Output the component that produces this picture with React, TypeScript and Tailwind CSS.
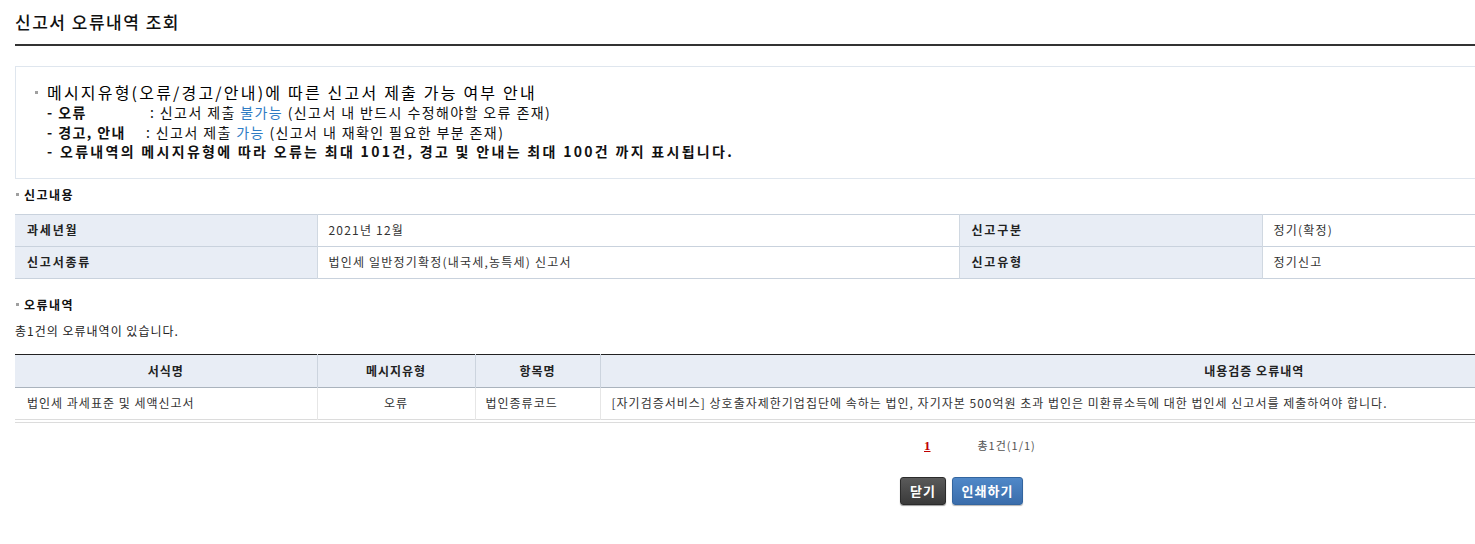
const font = "font-['Noto_Sans_CJK_KR',sans-serif]";

function SectionTitle({ title }: { title: string }) {
  return (
    <div className="flex items-center h-[16px]">
      <span className="ml-[1px] w-[3px] h-[3px] bg-[#a0a0a0]" />
      <span className="ml-[5px] text-[12px] font-bold text-[#111] leading-[16px] tracking-[1.5px]">{title}</span>
    </div>
  );
}

const summary = [
  ["과세년월", "2021년 12월", "신고구분", "정기(확정)"],
  ["신고서종류", "법인세 일반정기확정(내국세,농특세) 신고서", "신고유형", "정기신고"],
];

export default function App() {
  return (
    <div className={`${font} w-[1475px] h-[544px] overflow-hidden bg-white text-[#333]`}>
      <div className="w-[1893px] ml-[15px]">
        {/* Title */}
        <div className="pt-[10px] pb-[10px] border-b-2 border-[#333]">
          <h1 className="text-[17px] leading-[24px] tracking-[1.5px] text-[#111] font-medium">신고서 오류내역 조회</h1>
        </div>

        {/* Notice box */}
        <div className="mt-[20px] border border-[#dfe6ee] pl-[19px] pt-[14px] pb-[16px]">
          <div className="flex items-center leading-[22px]">
            <span className="w-[3px] h-[3px] bg-[#a0a0a0] mr-[9px]" />
            <span className="text-[16px] text-[#000] tracking-[2.2px]">
              메시지유형(오류/경고/안내)에 따른 신고서 제출 가능 여부 안내
            </span>
          </div>
          <div className="ml-[12px] text-[14px] leading-[19.5px] text-[#111] tracking-[1.4px]">
            <div>
              <span className="inline-block w-[103px] font-bold">- 오류</span>
              <span>: 신고서 제출 </span>
              <span className="text-[#2f7cc4]">불가능</span>
              <span> (신고서 내 반드시 수정해야할 오류 존재)</span>
            </div>
            <div>
              <span className="inline-block w-[99px] font-bold">- 경고, 안내</span>
              <span>: 신고서 제출 </span>
              <span className="text-[#2f7cc4]">가능</span>
              <span> (신고서 내 재확인 필요한 부분 존재)</span>
            </div>
            <div className="font-bold tracking-[2.3px]">
              - 오류내역의 메시지유형에 따라 오류는 최대 101건, 경고 및 안내는 최대 100건 까지 표시됩니다.
            </div>
          </div>
        </div>

        {/* 신고내용 */}
        <div className="mt-[8px]">
          <SectionTitle title="신고내용" />
        </div>
        <table className="mt-[11px] w-full table-fixed border-collapse text-[12px] tracking-[1.2px]">
          <colgroup>
            <col className="w-[302px]" />
            <col className="w-[642px]" />
            <col className="w-[303px]" />
            <col />
          </colgroup>
          <tbody>
            {summary.map((r) => (
              <tr key={r[0]} className="h-[32px] border-y border-[#c9d2dd]">
                <th className="bg-[#e8edf5] text-left font-bold pl-[12px] border-r border-[#d0d8e1] text-[#222] tracking-[1.8px]">{r[0]}</th>
                <td className="pl-[11px] border-r border-[#d0d8e1]">{r[1]}</td>
                <th className="bg-[#e8edf5] text-left font-bold pl-[12px] border-r border-[#d0d8e1] text-[#222] tracking-[1.8px]">{r[2]}</th>
                <td className="pl-[11px]">{r[3]}</td>
              </tr>
            ))}
          </tbody>
        </table>

        {/* 오류내역 */}
        <div className="mt-[18px]">
          <SectionTitle title="오류내역" />
        </div>
        <p className="mt-[10px] text-[12px] leading-[16px] text-[#222] tracking-[1px]">총1건의 오류내역이 있습니다.</p>

        <table className="mt-[15px] w-full table-fixed border-collapse text-[12px] tracking-[1px]">
          <colgroup>
            <col className="w-[302px]" />
            <col className="w-[158px]" />
            <col className="w-[125px]" />
            <col />
          </colgroup>
          <thead>
            <tr className="h-[33px] bg-[#e8edf5] border-t border-b border-t-[#222] border-b-[#aab3bd]">
              <th className="font-bold border-r border-[#ccd4de] text-[#222]">서식명</th>
              <th className="font-bold border-r border-[#ccd4de] text-[#222]">메시지유형</th>
              <th className="font-bold border-r border-[#ccd4de] text-[#222]">항목명</th>
              <th className="font-bold text-[#222]">내용검증 오류내역</th>
            </tr>
          </thead>
          <tbody>
            <tr className="h-[32px] border-b border-[#dcdcdc]">
              <td className="pl-[12px] border-r border-[#e6e6e6]">법인세 과세표준 및 세액신고서</td>
              <td className="text-center border-r border-[#e6e6e6]">오류</td>
              <td className="pl-[10px] border-r border-[#e6e6e6]">법인종류코드</td>
              <td className="pl-[11px]">
                [자기검증서비스] 상호출자제한기업집단에 속하는 법인, 자기자본 500억원 초과 법인은 미환류소득에 대한 법인세 신고서를 제출하여야 합니다.
              </td>
            </tr>
          </tbody>
        </table>
        <div className="mt-[2px] border-t border-[#dcdcdc]" />

        {/* Pagination */}
        <div className="mt-[15px] flex items-center h-[16px] pl-[909px]">
          <span className="text-[13px] font-bold text-[#c00000] underline font-['Liberation_Serif',serif]">1</span>
          <span className="ml-[47px] text-[11px] text-[#555] tracking-[1px]">총1건(1/1)</span>
        </div>

        {/* Buttons */}
        <div className="mt-[23px] flex justify-center gap-[6px]">
          <button className="h-[28px] w-[46px] rounded-[3px] border border-[#2b2b2b] bg-gradient-to-b from-[#5a5a5a] to-[#3a3a3a] text-white text-[13px] font-bold tracking-[1px] shadow-[0_1px_1px_rgba(0,0,0,0.4)]">
            닫기
          </button>
          <button className="h-[28px] w-[71px] rounded-[3px] border border-[#33659f] bg-gradient-to-b from-[#5088c8] to-[#3a6dab] text-white text-[13px] font-bold tracking-[1px] shadow-[0_1px_1px_rgba(0,0,0,0.3)]">
            인쇄하기
          </button>
        </div>
      </div>
    </div>
  );
}
